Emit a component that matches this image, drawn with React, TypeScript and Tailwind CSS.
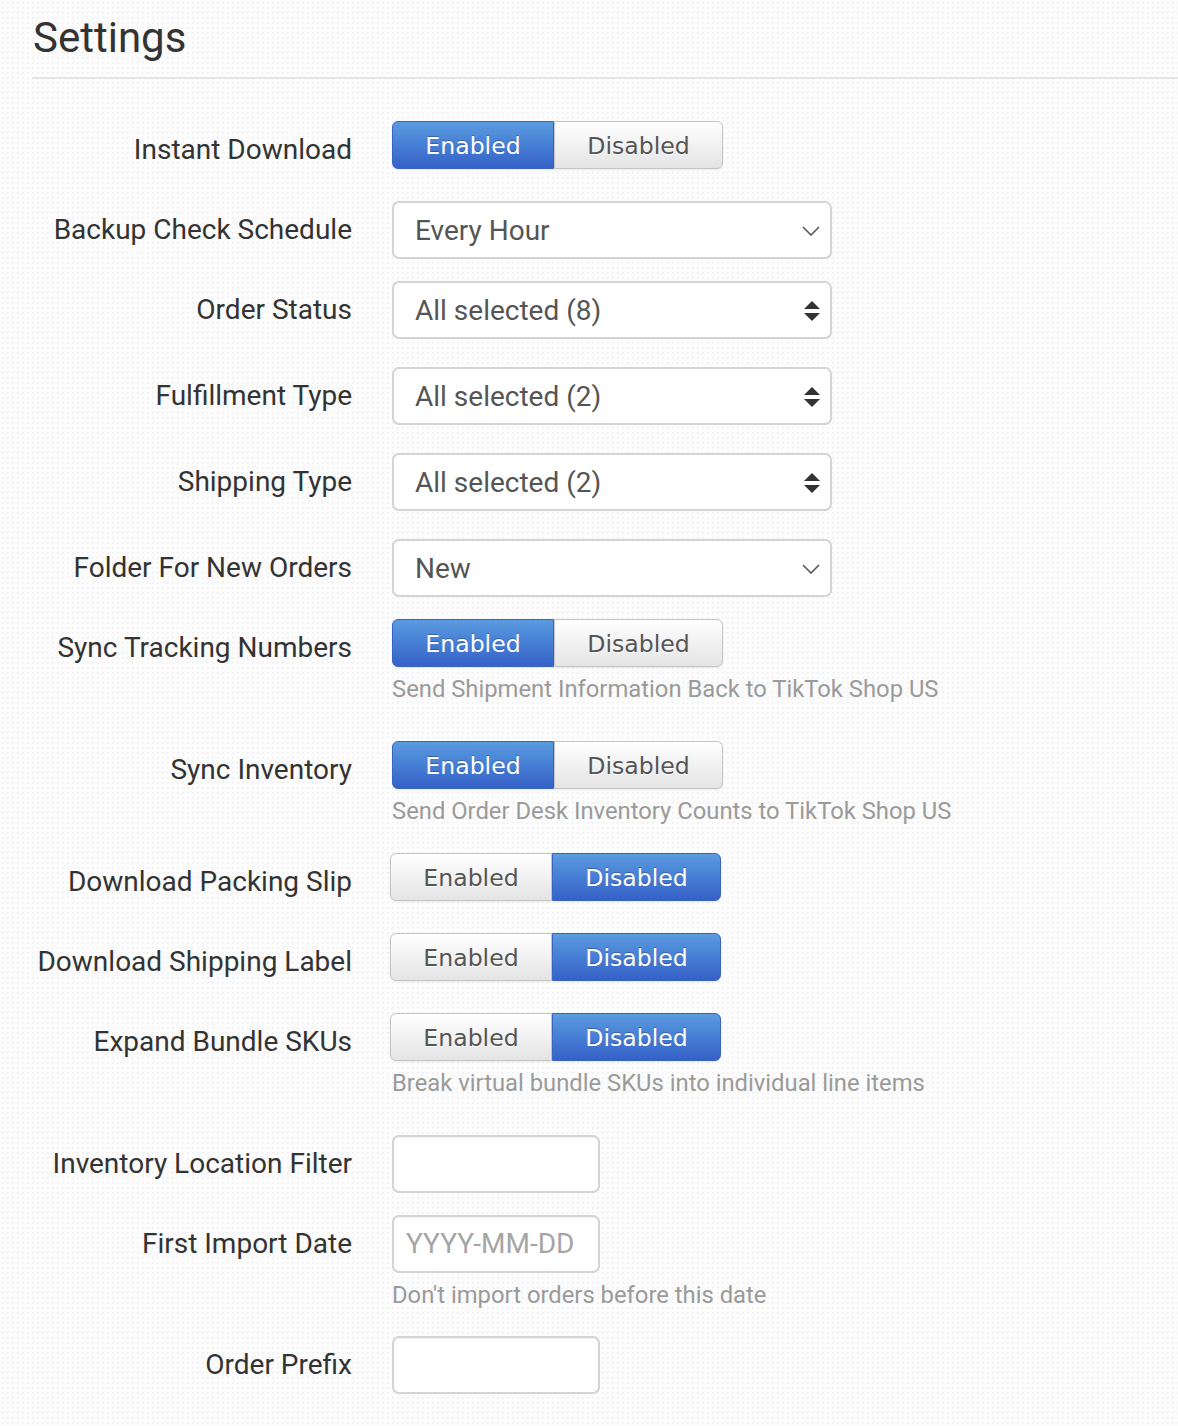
import React from "react"

type Row =
  | { label: string; kind: "toggle"; on: boolean; shift?: boolean; help?: string; mt: string }
  | { label: string; kind: "select"; value: string; mt: string }
  | { label: string; kind: "multi"; value: string; mt: string }
  | { label: string; kind: "input"; placeholder?: string; help?: string; mt: string }

const rows: Row[] = [
  { label: "Instant Download", kind: "toggle", on: true, mt: "mt-[42px]" },
  { label: "Backup Check Schedule", kind: "select", value: "Every Hour", mt: "mt-[22px]" },
  { label: "Order Status", kind: "multi", value: "All selected (8)", mt: "mt-[22px]" },
  { label: "Fulfillment Type", kind: "multi", value: "All selected (2)", mt: "mt-[28px]" },
  { label: "Shipping Type", kind: "multi", value: "All selected (2)", mt: "mt-[28px]" },
  { label: "Folder For New Orders", kind: "select", value: "New", mt: "mt-[28px]" },
  {
    label: "Sync Tracking Numbers",
    kind: "toggle",
    on: true,
    help: "Send Shipment Information Back to TikTok Shop US",
    mt: "mt-[22px]",
  },
  {
    label: "Sync Inventory",
    kind: "toggle",
    on: true,
    help: "Send Order Desk Inventory Counts to TikTok Shop US",
    mt: "mt-[37px]",
  },
  { label: "Download Packing Slip", kind: "toggle", on: false, shift: true, mt: "mt-[27px]" },
  { label: "Download Shipping Label", kind: "toggle", on: false, shift: true, mt: "mt-[22px]" },
  {
    label: "Expand Bundle SKUs",
    kind: "toggle",
    on: false,
    shift: true,
    help: "Break virtual bundle SKUs into individual line items",
    mt: "mt-[22px]",
  },
  { label: "Inventory Location Filter", kind: "input", mt: "mt-[37px]" },
  {
    label: "First Import Date",
    kind: "input",
    placeholder: "YYYY-MM-DD",
    help: "Don't import orders before this date",
    mt: "mt-[22px]",
  },
  { label: "Order Prefix", kind: "input", mt: "mt-[26px]" },
]

const blue =
  "bg-gradient-to-b from-[#5a9be0] to-[#3661c8] text-white border border-[#3a64c2] [text-shadow:0_-1px_0_rgba(0,0,0,0.25)]"
const gray =
  "bg-gradient-to-b from-[#ffffff] to-[#e4e4e4] text-[#555] border border-[#c4c4c4] [text-shadow:0_1px_0_#fff]"

function Toggle({ on, shift }: { on: boolean; shift?: boolean }) {
  return (
    <div
      className={`flex self-start h-[48px] font-['DejaVu_Sans',Verdana,sans-serif] text-[23.6px] shadow-[0_1px_2px_rgba(0,0,0,0.08)] rounded-[6px] ${
        shift ? "-ml-[2px]" : ""
      }`}
    >
      <div
        className={`w-[162px] pt-[3px] flex items-center justify-center rounded-l-[6px] ${on ? blue : gray}`}
      >
        Enabled
      </div>
      <div
        className={`w-[169px] pt-[3px] flex items-center justify-center rounded-r-[6px] ${on ? gray : blue}`}
      >
        Disabled
      </div>
    </div>
  )
}

function Chevron() {
  return (
    <svg width="18" height="10" viewBox="0 0 18 10" className="text-[#555]">
      <polyline points="1,1 9,9 17,1" fill="none" stroke="currentColor" strokeWidth="1.6" />
    </svg>
  )
}

function UpDown() {
  return (
    <svg width="16" height="20" viewBox="0 0 16 20" className="text-[#333]">
      <polygon points="0,8 8,0 16,8" fill="currentColor" />
      <polygon points="0,12 16,12 8,20" fill="currentColor" />
    </svg>
  )
}

function Help({ text }: { text: string }) {
  return <div className="mt-[7px] text-[23.8px] leading-[30px] text-[#9a9a9a] whitespace-nowrap">{text}</div>
}

function Control({ row }: { row: Row }) {
  if (row.kind === "toggle") {
    return (
      <div className="flex flex-col">
        <Toggle on={row.on} shift={row.shift} />
        {row.help && <Help text={row.help} />}
      </div>
    )
  }
  if (row.kind === "select" || row.kind === "multi") {
    return (
      <div className="w-[440px] h-[58px] bg-white border-2 border-[#d4d4d4] rounded-[7px] flex items-center justify-between pl-[21px] pr-[10px] pt-px text-[28px] text-[#555]">
        <span>{row.value}</span>
        {row.kind === "select" ? <Chevron /> : <UpDown />}
      </div>
    )
  }
  return (
    <div className="flex flex-col">
      <div className="w-[208px] h-[58px] bg-white border-2 border-[#d4d4d4] rounded-[7px] flex items-center pl-[12px] text-[28px] text-[#a5a5a5] shadow-[inset_0_1px_2px_rgba(0,0,0,0.06)]">
        {row.placeholder}
      </div>
      {row.help && <Help text={row.help} />}
    </div>
  )
}

export default function App() {
  return (
    <div className="min-h-screen bg-[#fcfcfc] bg-[radial-gradient(#f1f1f1_1px,transparent_1px)] bg-[length:5px_5px] font-['Roboto','Liberation_Sans',sans-serif] pl-[32px] pb-8">
      {/* Header */}
      <div className="border-b-2 border-[#e4e4e4] pt-[10px] pb-[11px]">
        <h1 className="text-[42px] leading-[56px] text-[#333] pl-px">Settings</h1>
      </div>

      {/* Form rows */}
      <div className="flex flex-col">
        {rows.map((row) => (
          <div key={row.label} className={`flex items-start ${row.mt}`}>
            <div className="w-[320px] h-[58px] flex items-center justify-end text-[28px] text-[#333] whitespace-nowrap">
              {row.label}
            </div>
            <div className="ml-[40px]">
              <Control row={row} />
            </div>
          </div>
        ))}
      </div>
    </div>
  )
}
